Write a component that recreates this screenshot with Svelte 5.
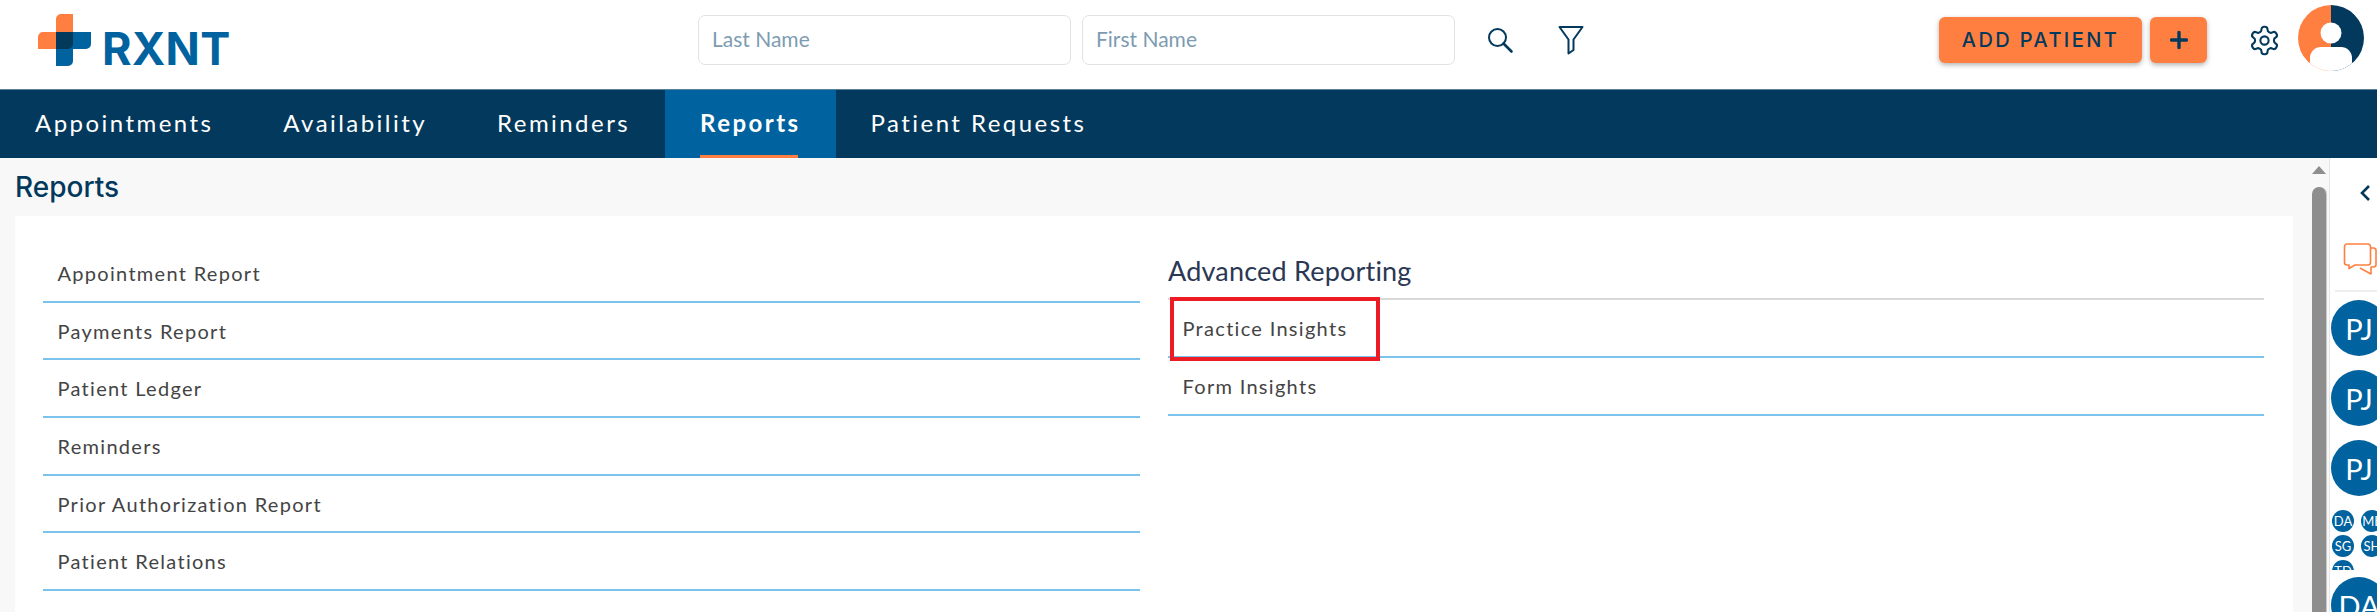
<script>
  const tabs = ['Appointments', 'Availability', 'Reminders', 'Reports', 'Patient Requests'];
  const left = ['Appointment Report', 'Payments Report', 'Patient Ledger', 'Reminders', 'Prior Authorization Report', 'Patient Relations'];
  const small = ['DA', 'ME', 'SG', 'SH', 'TD'];
</script>

<div class="page">
  <header class="top">
    <div class="logo">
      <svg class="mark" viewBox="0 0 53 52" width="53" height="52" aria-hidden="true">
        <path d="M18 5a5 5 0 0 1 5-5h12v30a5 5 0 0 1-5 5H0V23a5 5 0 0 1 5-5h13z" fill="#ff7f40"/>
        <path d="M18 18h35v12a5 5 0 0 1-5 5H35v12a5 5 0 0 1-5 5H18z" fill="#00629e"/>
        <path d="M18 18h17v12a5 5 0 0 1-5 5H18z" fill="#033a5c"/>
      </svg>
      <span class="word">RXNT</span>
    </div>
    <div class="search">
      <input class="field" placeholder="Last Name" />
      <input class="field" placeholder="First Name" />
      <svg class="ic-search" viewBox="0 0 28 28" width="28" height="28" fill="none" stroke="#03395c" stroke-width="2" aria-hidden="true">
        <circle cx="11.5" cy="11.5" r="8.5"/><path d="M17.5 17.5l8 8" stroke-width="2.6" stroke-linecap="round"/>
      </svg>
      <svg class="ic-filter" viewBox="0 0 26 30" width="26" height="30" fill="none" stroke="#03395c" stroke-width="2" stroke-linejoin="round" aria-hidden="true">
        <path d="M1.5 2h23l-9 12.500V25l-5 3.500V14.500z"/>
      </svg>
    </div>
    <div class="actions">
      <button class="btn add">ADD PATIENT</button>
      <button class="btn plus" aria-label="Add">
        <svg viewBox="0 0 18 18" width="18" height="18" aria-hidden="true"><path d="M9 1.500v15M1.500 9h15" stroke="#03395c" stroke-width="3.400" stroke-linecap="round"/></svg>
      </button>
      <svg class="gear" viewBox="0 0 24 24" width="33" height="33" fill="none" stroke="#03395c" stroke-width="1.500" stroke-linecap="round" stroke-linejoin="round" aria-hidden="true">
        <path d="M12.22 2h-.44a2 2 0 0 0-2 2v.18a2 2 0 0 1-1 1.730l-.43.25a2 2 0 0 1-2 0l-.15-.08a2 2 0 0 0-2.730.73l-.22.38a2 2 0 0 0 .73 2.730l.15.1a2 2 0 0 1 1 1.720v.51a2 2 0 0 1-1 1.740l-.15.09a2 2 0 0 0-.73 2.730l.22.38a2 2 0 0 0 2.730.73l.15-.08a2 2 0 0 1 2 0l.43.25a2 2 0 0 1 1 1.730V20a2 2 0 0 0 2 2h.44a2 2 0 0 0 2-2v-.18a2 2 0 0 1 1-1.730l.43-.25a2 2 0 0 1 2 0l.15.08a2 2 0 0 0 2.730-.73l.22-.39a2 2 0 0 0-.73-2.730l-.15-.08a2 2 0 0 1-1-1.740v-.5a2 2 0 0 1 1-1.740l.15-.09a2 2 0 0 0 .73-2.730l-.22-.38a2 2 0 0 0-2.730-.73l-.15.08a2 2 0 0 1-2 0l-.43-.25a2 2 0 0 1-1-1.730V4a2 2 0 0 0-2-2z"/>
        <circle cx="12" cy="12" r="3"/>
      </svg>
      <svg class="avatar" viewBox="0 0 66 66" width="66" height="66" aria-hidden="true">
        <defs><clipPath id="av"><circle cx="33" cy="33" r="33"/></clipPath></defs>
        <g clip-path="url(#av)">
          <rect width="33" height="66" fill="#ff7f40"/>
          <rect x="33" width="33" height="66" fill="#03395c"/>
          <circle cx="33" cy="28" r="10.500" fill="#fff"/>
          <rect x="12" y="42" width="42" height="30" rx="11" fill="#fff"/>
        </g>
      </svg>
    </div>
  </header>

  <nav class="tabs">
    {#each tabs as t}
      <a class="tab" class:on={t === 'Reports'} href="#top" onclick={(e) => e.preventDefault()}><span>{t}</span></a>
    {/each}
  </nav>

  <div class="body">
    <main class="main">
      <h1 class="title">Reports</h1>
      <section class="panel">
        <div class="col">
          {#each left as l}
            <div class="row">{l}</div>
          {/each}
        </div>
        <div class="col">
          <h2 class="adv">Advanced Reporting</h2>
          <div class="row mark-row">Practice Insights<span class="redbox"></span></div>
          <div class="row">Form Insights</div>
        </div>
      </section>
    </main>

    <div class="scroll">
      <svg class="arrow" viewBox="0 0 14 8" width="14" height="8" aria-hidden="true"><path d="M7 0l7 8H0z" fill="#8e8e8e"/></svg>
      <div class="thumb"></div>
    </div>

    <aside class="side">
      <svg class="chev" viewBox="0 0 12 18" width="12" height="18" fill="none" stroke="#03395c" stroke-width="2.600" aria-hidden="true"><path d="M10 2L3 9l7 7"/></svg>
      <svg class="chat" viewBox="0 0 34 32" width="34" height="32" fill="none" stroke="#ff7f40" stroke-width="1.600" stroke-linejoin="round" aria-hidden="true">
        <path d="M4 1h21a2.500 2.500 0 0 1 2.500 2.500v16a2.500 2.500 0 0 1-2.500 2.500H12l-6 3.500V22H4a2.500 2.500 0 0 1-2.500-2.500v-16A2.500 2.500 0 0 1 4 1z"/>
        <path d="M27.500 5h3a2.500 2.500 0 0 1 2.500 2.500v14a2.500 2.500 0 0 1-2.500 2.500H28v7l-11-6"/>
      </svg>
      <div class="rule"></div>
      <div class="big">PJ</div>
      <div class="big">PJ</div>
      <div class="big">PJ</div>
      <div class="cluster">
        {#each small as s}<div class="mini">{s}</div>{/each}
      </div>
      <div class="big last">DA</div>
    </aside>
  </div>
</div>

<style>
  :global(body) { margin: 0; background: #fff; }
  .page { width: 2377px; height: 612px; overflow: hidden; font-family: Lato, "Liberation Sans", sans-serif; display: flex; flex-direction: column; }

  .top { height: 89px; flex: none; display: flex; align-items: flex-start; background: #fff; }
  .logo { display: flex; align-items: flex-end; margin: 14px 0 0 38px; width: 660px; height: 52px; flex: none; }
  .word { font-family: Inter, Lato, sans-serif; font-weight: 700; font-size: 45px; line-height: 36px; color: #00629e; margin-left: 11px; letter-spacing: 0.4px; height: 35px; }
  .search { display: flex; align-items: center; height: 50px; margin-top: 15px; gap: 11px; flex: none; }
  .field { box-sizing: border-box; width: 373px; height: 50px; border: 1px solid #e2e2e2; border-radius: 7px; padding: 0 13px 3px; font: 21px Lato, sans-serif; background: #fff; outline: none; }
  .field::placeholder { color: #7d9cb1; opacity: 1; }
  .ic-search { margin-left: 20px; }
  .ic-filter { margin-left: 33px; }
  .actions { display: flex; align-items: flex-start; margin-left: 355px; flex: none; }
  .btn { border: 0; height: 46px; margin-top: 17px; background: #ff7f40; border-radius: 6px; box-shadow: 0 2px 5px rgba(0,0,0,.3); color: #03395c; font-family: Inter, Lato, sans-serif; font-weight: 500; font-size: 20px; letter-spacing: 2.400px; padding: 0; display: flex; align-items: center; justify-content: center; }
  .add { width: 203px; }
  .plus { width: 57px; margin-left: 8px; }
  .gear { margin: 24px 0 0 41px; }
  .avatar { margin: 5px 0 0 17px; flex: none; }

  .tabs { height: 69px; flex: none; display: flex; background: #03395c; border-top: 1px solid #5d7f96; box-sizing: border-box; }
  .tab { display: flex; position: relative; align-items: center; padding: 0 35px 4px; color: #fff; text-decoration: none; font-size: 24px; letter-spacing: 2.450px; }
  .tab.on { background: #00629e; font-weight: 700; }
  .tab.on::after { content: ""; position: absolute; left: 35px; right: 38px; bottom: 0; height: 3px; background: #ff7f40; }

  .body { flex: 1; min-height: 0; display: flex; background: #f8f8f8; }
  .main { width: 2293px; flex: none; }
  .title { margin: 0; height: 58px; box-sizing: border-box; padding: 11px 0 0 15px; font-family: Inter, Lato, sans-serif; font-size: 28px; line-height: 36px; font-weight: 500; color: #03395c; }
  .panel { margin-left: 15px; height: 396px; box-sizing: border-box; background: #fff; padding: 29px 29px 0 28px; display: grid; grid-template-columns: 1097px 1096px; column-gap: 28px; }
  .col { display: flex; flex-direction: column; }
  .row { position: relative; height: 57.700px; box-sizing: border-box; border-bottom: 2px solid #7cc3ec; padding: 0 0 0 14.500px; display: flex; align-items: center; font-size: 20px; letter-spacing: 1.300px; color: #444; }
  .adv { margin: 0; height: 55px; box-sizing: border-box; border-bottom: 2px solid #d9d9d9; font-weight: 400; font-size: 27px; line-height: 52px; color: #2a3854; letter-spacing: 0.2px; }
  .mark-row { height: 58px; }
  .redbox { position: absolute; left: 2px; top: -3px; width: 210px; height: 64px; box-sizing: border-box; border: 4px solid #ed1c24; }

  .scroll { width: 37px; flex: none; display: flex; flex-direction: column; align-items: flex-start; padding: 8px 0 0 19px; box-sizing: border-box; border-right: 1px solid #e6e6e6; }
  .thumb { margin-top: 13px; width: 14px; flex: 1; background: #8e8e8e; border-radius: 7px 7px 0 0; box-shadow: 1px 0 0 #c8c8c8; }

  .side { flex: 1; min-width: 0; overflow: hidden; background: #fff; display: flex; flex-direction: column; align-items: flex-start; }
  .chev { margin: 26px 0 0 29px; flex: none; }
  .chat { margin: 41px 0 0 13px; flex: none; }
  .rule { width: 60px; height: 2px; background: #eee; margin: 15px 0 0 5px; flex: none; }
  .big { flex: none; width: 56px; height: 56px; border-radius: 50%; background: #00629e; color: #fff; font-size: 29px; display: flex; align-items: center; justify-content: center; margin: 8px 0 6px 1px; }
  .cluster { flex: none; display: grid; grid-template-columns: 22px 22px; column-gap: 7px; row-gap: 3px; grid-auto-rows: 22px; height: 60px; overflow: hidden; margin: 8px 0 0 2px; width: 60px; }
  .mini { width: 22px; height: 22px; border-radius: 50%; background: #00629e; color: #fff; font-size: 13px; display: flex; align-items: center; justify-content: center; white-space: nowrap; overflow: hidden; }
  .last { margin-top: 7px; }
</style>
